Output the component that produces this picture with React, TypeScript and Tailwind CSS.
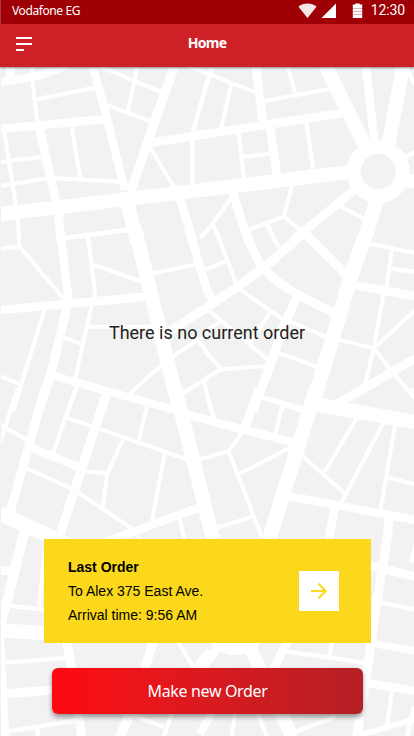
import React from "react";

type Road = [width: number, path: string];
type District = { x: number; y: number; roads: Road[] };

// Road centre lines, in thirds of a pixel from each district's origin.
const districts: District[] = [
  {
    x: 0,
    y: 60,
    roads: [
      [24, "M0 67C90 54 135 48 205 12"],
      [28, "M31 10V60"],
      [12, "M97 20V62L112 185"],
      [12, "M110 118L282 83"],
      [25, "M278 20L320 170L374 390"],
      [42, "M0 463L621 388"],
      [42, "M380 420L411 545"],
      [28, "M523 20L457 205L392 395"],
      [12, "M295 17L485 97"],
      [12, "M318 134L455 185"],
      [12, "M412 24L383 156"],
      [26, "M0 207L315 177"],
      [26, "M118 205L169 430"],
      [26, "M176 455L182 545"],
      [12, "M214 195L241 355"],
      [12, "M158 355L358 365"],
      [12, "M13 215L48 438"],
      [12, "M0 306L128 290"],
      [12, "M0 378L145 355"],
      [26, "M448 249L621 222"],
      [12, "M448 258L522 382"],
      [13, "M577 235V375"],
      [26, "M538 410L580 545"],
      [12, "M53 475L58 545"],
      [12, "M192 533L385 508"],
      [12, "M264 525V545"],
    ],
  },
  {
    x: 207,
    y: 60,
    roads: [
      [26, "M-20 225L402 160"],
      [12, "M-60 16L145 97"],
      [14, "M15 24L-2 75L-42 215"],
      [12, "M73 72L42 208"],
      [26, "M147 20L168 192"],
      [26, "M188 195L210 345"],
      [12, "M241 20L265 98"],
      [12, "M170 124L368 86"],
      [43, "M355 16L475 260"],
      [25, "M477 20L503 250"],
      [42, "M589 16L545 250"],
      [12, "M601 30L630 86"],
      [42, "M-10 389L430 336"],
      [12, "M596 292L625 275"],
      [42, "M596 362L635 366"],
      [13, "M95 218L111 354"],
      [12, "M108 290L188 282"],
      [13, "M298 188L319 330"],
      [26, "M76 392L124 545"],
      [12, "M256 372L230 470L290 518"],
      [12, "M122 511L230 470"],
      [12, "M74 412L12 498L-22 535"],
      [12, "M17 492L40 545"],
      [12, "M180 490L207 545"],
      [26, "M440 392L258 540"],
      [12, "M398 438L472 476"],
      [43, "M510 422L470 545"],
    ],
  },
  {
    x: 0,
    y: 230,
    roads: [
      [43, "M403 -10L540 545"],
      [25, "M180 -5L206 215"],
      [27, "M207 205L153 430L116 545"],
      [26, "M0 240L440 200"],
      [12, "M55 -5L58 50L195 210"],
      [12, "M0 56L60 50"],
      [12, "M195 25L388 1"],
      [12, "M264 18L287 204"],
      [12, "M278 104L428 156"],
      [12, "M458 130L592 103"],
      [26, "M565 -5L621 180L640 215"],
      [13, "M134 238L38 545"],
      [12, "M0 438L62 463"],
      [12, "M275 225L226 446"],
      [12, "M188 321L243 342"],
      [12, "M262 290H460"],
      [24, "M152 435L325 485L520 538"],
      [12, "M488 402L384 496"],
      [12, "M513 382L625 310"],
      [12, "M598 335L625 372"],
      [12, "M548 488L625 445"],
      [12, "M612 455L632 540"],
      [12, "M233 462L205 545"],
      [27, "M322 488L303 545"],
    ],
  },
  {
    x: 207,
    y: 230,
    roads: [
      [27, "M300 0L175 110L80 178L0 232L-110 303"],
      [27, "M288 3L418 135"],
      [26, "M112 -5C126 35 145 75 160 103C205 165 290 205 382 249"],
      [12, "M180 -15L215 52"],
      [44, "M484 -10L435 130L312 540"],
      [12, "M488 41L621 68"],
      [12, "M555 58L538 175"],
      [14, "M553 116L621 125"],
      [26, "M440 165L621 198"],
      [12, "M530 190L500 355L474 465"],
      [12, "M625 240L500 355L555 425L625 507"],
      [12, "M395 329L500 355"],
      [27, "M625 385L395 520"],
      [12, "M605 486L625 478"],
      [27, "M268 205L225 300L195 390L137 545"],
      [12, "M253 276L355 320"],
      [12, "M213 368L328 410"],
      [12, "M163 501L292 535"],
      [12, "M225 520V545"],
      [12, "M98 178L242 278"],
      [12, "M190 245L155 300L128 338"],
      [12, "M4 240L48 277L188 394"],
      [12, "M44 274L0 300"],
      [12, "M-10 360L45 418L178 408"],
      [12, "M45 418L-5 444"],
      [12, "M24 -5L88 162"],
      [12, "M-5 120L60 92"],
    ],
  },
  {
    x: 0,
    y: 390,
    roads: [
      [27, "M135 -5L28 375"],
      [12, "M53 -5L0 160"],
      [13, "M0 105L85 152"],
      [25, "M86 170L250 237"],
      [12, "M227 -5L160 188"],
      [12, "M203 85L280 110L560 208"],
      [12, "M598 208L625 201"],
      [27, "M321 5L178 440"],
      [12, "M441 48L416 153"],
      [12, "M370 148L322 250L308 358"],
      [12, "M252 244L322 250"],
      [12, "M495 185L456 393"],
      [12, "M77 234L220 298L395 415L425 455"],
      [25, "M310 458L395 427L602 351"],
      [25, "M555 72L640 94"],
      [43, "M524 -10L640 450"],
      [12, "M548 10L572 -5"],
      [44, "M0 370L210 467"],
      [13, "M538 385L555 452"],
    ],
  },
  {
    x: 207,
    y: 390,
    roads: [
      [25, "M-5 89L255 156"],
      [27, "M157 -5L115 110"],
      [12, "M158 21L287 63"],
      [12, "M225 48L206 133"],
      [12, "M0 10L20 82"],
      [44, "M330 -10L182 460"],
      [12, "M105 128L65 183L-5 204"],
      [12, "M65 183L135 365L172 460"],
      [12, "M97 251L252 172"],
      [12, "M28 414L138 380"],
      [43, "M325 43L630 97"],
      [12, "M448 86L352 247"],
      [12, "M283 195L416 313"],
      [13, "M529 98L404 337"],
      [12, "M564 106L521 358"],
      [12, "M540 262L625 283"],
      [25, "M243 318L625 390"],
      [26, "M384 348L364 460"],
      [26, "M547 382L530 515"],
      [12, "M628 455L612 520"],
    ],
  },
  {
    x: 0,
    y: 530,
    roads: [
      [30, "M74 0L20 218"],
      [36, "M17 215L-7 300L10 625"],
      [27, "M0 121H35"],
      [12, "M134 65L117 230"],
      [13, "M25 227L140 240"],
      [43, "M5 301L140 310"],
      [27, "M200 335L216 420L245 620"],
      [27, "M460 335L433 420"],
      [12, "M8 398L200 384"],
      [27, "M15 491L160 480"],
      [12, "M534 335L585 420"],
      [12, "M625 360L575 418"],
      [13, "M25 604L228 571"],
      [14, "M110 595L115 620"],
      [30, "M393 545L358 625"],
      [13, "M400 556L492 592"],
      [13, "M516 550L490 625"],
    ],
  },
  {
    x: 207,
    y: 630,
    roads: [
      [26, "M35 50L-22 122"],
      [40, "M118 30L255 320"],
      [12, "M86 245L73 320"],
      [24, "M15 248L-22 312"],
      [12, "M150 245L180 320"],
      [26, "M243 30L198 122"],
      [13, "M235 64L478 99"],
      [13, "M375 35L368 80"],
      [22, "M488 38L630 65"],
      [27, "M545 -300L512 -100L492 40L472 180L448 325"],
      [25, "M480 158L625 183"],
      [13, "M555 185L540 285"],
      [18, "M450 317L625 268"],
      [14, "M622 230L600 320"],
      [13, "M265 305L385 260"],
      [26, "M490 -193L625 -160"],
      [14, "M490 -89L625 -60"],
    ],
  },
];

function MapBackdrop() {
  return (
    <svg
      className="pointer-events-none absolute inset-0 h-full w-full"
      viewBox="0 0 414 736"
      fill="none"
      stroke="#fff"
      aria-hidden="true"
    >
      {districts.map((d) => (
        <g key={`${d.x}-${d.y}`} transform={`translate(${d.x} ${d.y}) scale(0.33333)`}>
          {d.roads.map(([width, path]) => (
            <path key={path} d={path} strokeWidth={width} />
          ))}
        </g>
      ))}
      <circle cx="378.3" cy="171.5" r="24.5" strokeWidth="14" fill="#f2f2f2" />
      <circle cx="235.5" cy="623.5" r="24.5" strokeWidth="14" fill="#f2f2f2" />
      <path d="M0.5 0V736" stroke="#f2f2f2" />
    </svg>
  );
}

function StatusBar() {
  return (
    <div className="flex h-6 items-center border-l border-[#b23a3f] bg-[#9f0006] pl-[11px] pr-[9px] text-white">
      <span className="-mt-[3px] font-['Noto_Sans',sans-serif] text-[12px] leading-4 tracking-[-0.4px]">Vodafone EG</span>
      <svg className="ml-auto mr-px" width="72" height="24" viewBox="0 0 72 24" fill="#fff" aria-hidden="true">
        <path d="M9.5 18L.5 6.8C5.5 2.5 13.5 2.5 18.5 6.8Z" opacity=".9" />
        <path d="M38 3.5V18H23.5Z" />
        <path d="M54.8 4.5H57.3V3.5H61.7V4.5H64.2V18H54.8Z" />
        <path d="M55 8.5H64M55 11.5H64M55 14.5H64" stroke="#9f0006" strokeOpacity=".3" />
      </svg>
      <span className="-mt-1 font-[Roboto,sans-serif] text-[14px] leading-4 tracking-[-0.1px]">12:30</span>
    </div>
  );
}

function AppBar() {
  return (
    <header className="grid h-[43px] grid-cols-[1fr_auto_1fr] items-center bg-[#cd2027] px-4 text-white shadow-[0_1px_2px_rgba(0,0,0,0.45)]">
      <button aria-label="Menu" className="-mt-[3px] flex flex-col gap-1">
        <span className="h-0.5 w-4 bg-white" />
        <span className="h-0.5 w-4 bg-white" />
        <span className="h-0.5 w-2 bg-white" />
      </button>
      <h1 className="-mt-1.5 font-['Noto_Sans',sans-serif] text-[14px] font-bold leading-5 tracking-[-0.7px]">Home</h1>
    </header>
  );
}

export default function App() {
  return (
    <div className="relative h-[736px] w-[414px] overflow-hidden bg-[#f2f2f2]">
      <MapBackdrop />
      <div className="relative flex h-full flex-col">
        <StatusBar />
        <AppBar />
        <p className="mt-[254px] text-center font-[Roboto,sans-serif] text-[18px] leading-6 text-[#231f20]">
          There is no current order
        </p>
        <section className="ml-11 mt-[194px] flex h-[104px] w-[327px] items-center justify-between bg-[#fbd81b] pl-6 pr-8 font-['Liberation_Sans',Arial,sans-serif] text-[14px] leading-6 text-black">
          <div>
            <h2 className="font-bold">Last Order</h2>
            <p>To Alex 375 East Ave.</p>
            <p>Arrival time: 9:56 AM</p>
          </div>
          <button aria-label="Open last order" className="flex size-10 items-center justify-center bg-white">
            <svg width="16" height="16" viewBox="0 0 16 16" fill="none" stroke="#fbd81b" strokeWidth="2" aria-hidden="true">
              <path d="M0 8H15M7.5.7L14.8 8L7.5 15.3" />
            </svg>
          </button>
        </section>
        <button className="ml-[52px] mt-[25px] h-[46px] w-[311px] rounded-md bg-linear-to-r from-[#ff0810] to-[#b32025] font-['Noto_Sans',sans-serif] text-[16px] leading-6 tracking-[-0.35px] text-white shadow-[0_3px_5px_rgba(0,0,0,0.4)]">
          Make new Order
        </button>
      </div>
    </div>
  );
}
